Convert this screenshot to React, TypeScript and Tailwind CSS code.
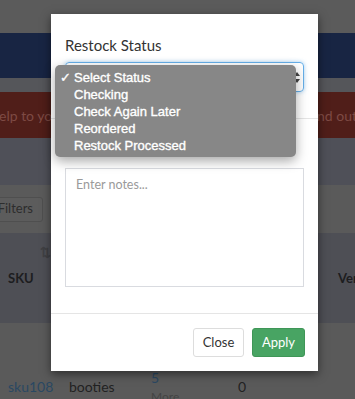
import React from "react";

export default function App() {
  return (
    <div className="relative w-[355px] h-[399px] overflow-hidden bg-[#5b5b5b]" style={{ fontFamily: "Lato, 'Open Sans', sans-serif" }}>
      {/* background page (dimmed) */}
      <div className="flex flex-col">
        <div className="h-[33px] bg-[#5b5b5b]" />
        <div className="h-[45px] bg-[#182543]" />
        <div className="h-[14px] bg-[#55565a]" />
        <div className="h-[46px] bg-[#501e19] flex items-center justify-between text-[14px] text-[#7e4a44]">
          <span className="-ml-[1px]">elp to you</span>
          <span className="-mr-[2px]">nd out</span>
        </div>
        <div className="h-[47px] bg-[#4f5058]" />
        <div className="h-[48px] bg-[#5a5a5a] flex items-center">
          <div className="-ml-[10px] w-[53px] h-[25px] rounded-[3px] border border-[#4f4f4f] bg-[#5c5c5c] flex items-center justify-end pr-[9px] text-[13px] text-[#2d2d2d]">Filters</div>
        </div>
        <div className="h-[90px] bg-[#4e4f55] flex justify-between">
          <div className="relative w-[60px]">
            <span className="absolute left-[40px] top-[10px] text-[#3f3f43] text-[13px] font-bold">⇅</span>
            <span className="absolute left-[8px] top-[36px] text-[13px] font-bold text-[#1d1d1f]">SKU</span>
          </div>
          <div className="relative w-[40px]">
            <span className="absolute left-[23px] top-[36px] text-[13px] font-bold text-[#1d1d1f]">Ver</span>
          </div>
        </div>
        <div className="relative h-[76px] bg-[#5a5a5a] text-[14px]">
          <span className="absolute left-[8px] top-[53px] text-[#2a4862]">sku108</span>
          <span className="absolute left-[69px] top-[53px] text-[#222]">booties</span>
          <span className="absolute left-[151px] top-[44px] text-[#2a4862]">5</span>
          <span className="absolute left-[151px] top-[65px] text-[12px] text-[#444]">More</span>
          <span className="absolute left-[238px] top-[53px] text-[#222]">0</span>
        </div>
      </div>

      {/* modal */}
      <div className="absolute left-[51px] top-[14px] w-[267px] h-[357px] bg-white shadow-[0_3px_9px_rgba(0,0,0,0.5)] flex flex-col">
        <div className="px-[14px] pt-[21px] flex flex-col">
          <div className="text-[15px] leading-[20px] text-[#333]">Restock Status</div>
          <div className="mt-[7px] h-[30px] rounded-[4px] border border-[#66afe9] shadow-[0_0_4px_rgba(102,175,233,0.6)] relative">
            <svg className="absolute right-[3px] top-[9px]" width="6" height="11" viewBox="0 0 6 11">
              <path d="M3 0 L6 4 L0 4 Z" fill="#444" />
              <path d="M3 11 L6 7 L0 7 Z" fill="#444" />
            </svg>
          </div>
        </div>
        <div className="mt-[26px] h-px bg-[#e5e5e5]" />
        <div className="px-[14px] mt-[49px]">
          <div className="h-[119px] border border-[#d9dbe0] pl-[10px] pt-[7px] text-[12.5px] text-[#9a9a9a]">Enter notes...</div>
        </div>
        <div className="mt-[26px] h-px bg-[#e5e5e5]" />
        <div className="flex justify-end gap-[8px] px-[13px] pt-[14px]">
          <div className="w-[51px] h-[29px] rounded-[3px] border border-[#dddddd] flex items-center justify-center text-[13px] text-[#333]">Close</div>
          <div className="w-[53px] h-[29px] rounded-[3px] bg-[#48a463] border border-[#3f9657] flex items-center justify-center text-[13px] text-white">Apply</div>
        </div>

        {/* open native dropdown */}
        <div className="absolute left-[4px] top-[51px] w-[241px] h-[92px] rounded-[5px] bg-[#878787] shadow-[0_4px_12px_rgba(0,0,0,0.35)] pt-[4px] text-white text-[13px] leading-[17px] [-webkit-text-stroke:0.35px_white]" style={{ fontFamily: "'Liberation Sans', Arial, sans-serif" }}>
          {["Select Status", "Checking", "Check Again Later", "Reordered", "Restock Processed"].map((t, i) => (
            <div key={t} className="relative pl-[19px]">
              {i === 0 && <span className="absolute left-[5px] top-0">✓</span>}
              {t}
            </div>
          ))}
        </div>
      </div>
    </div>
  );
}
